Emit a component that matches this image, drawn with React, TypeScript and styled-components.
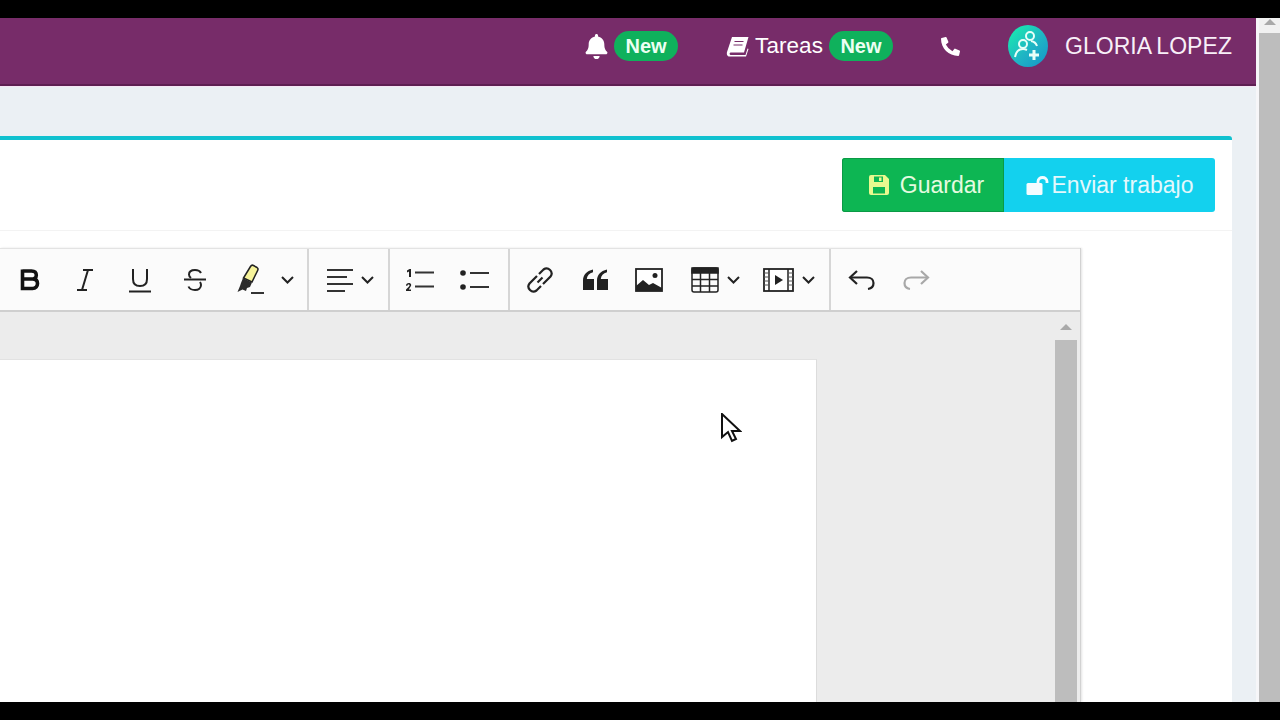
import React from 'react';
import styled, { createGlobalStyle } from 'styled-components';
import { FaBell, FaPhoneAlt } from 'react-icons/fa';

const GlobalStyle = createGlobalStyle`
   html, body {
      margin: 0;
      padding: 0;
      background: #000;
      overflow: hidden;
   }
   body {
      font-family: "Liberation Sans", Arial, sans-serif;
   }
`;

const Screen = styled.div`
   width: 1280px;
   height: 720px;
   padding: 18px 0;
   box-sizing: border-box;
   background: #000;
   display: flex;
`;

const Page = styled.div`
   width: 1256px;
   display: flex;
   flex-direction: column;
   background: #ebf0f4;
   overflow: hidden;
`;

const Gutter = styled.div`
   width: 3px;
   background: #f6f6f8;
`;

const Scrollbar = styled.div`
   display: flex;
   flex-direction: column;
   align-items: center;
   width: 21px;
   background: #f1f1f1;
`;

const ScrollArrow = styled.div<{ $height: number; $top: number }>`
   height: ${(p) => p.$height}px;
   box-sizing: border-box;
   padding-top: ${(p) => p.$top}px;
   width: 100%;
   display: flex;
   align-items: flex-start;
   justify-content: center;
   &::before {
      content: '';
      border-left: 6px solid transparent;
      border-right: 6px solid transparent;
      border-bottom: 6px solid #a9a9a9;
   }
`;

const ScrollThumb = styled.div`
   flex: 1;
   width: 100%;
   background: #bdbdbd;
`;

const Header = styled.header`
   height: 68px;
   box-sizing: border-box;
   flex-shrink: 0;
   background: #772c69;
   border-bottom: 2px solid #5e1f52;
   box-shadow: 0 1px 0 #f6e6f6;
   padding: 0 24px 10px 0;
   display: flex;
   align-items: center;
   justify-content: flex-end;
   gap: 48px;
   color: #fff;
`;

const NavItem = styled.div<{ $gap?: number }>`
   display: flex;
   align-items: center;
   font-size: 22.5px;
   letter-spacing: 0.05px;
   gap: ${(p) => p.$gap ?? 5}px;
   svg {
      flex-shrink: 0;
   }
`;

const Badge = styled.span`
   width: 64px;
   height: 30px;
   border-radius: 15px;
   background: #0fb15c;
   color: #ecfff2;
   font-size: 20px;
   font-weight: 700;
   letter-spacing: 0;
   display: flex;
   align-items: center;
   justify-content: center;
`;

const UserBox = styled.div`
   display: flex;
   align-items: center;
   gap: 17px;
`;

const Avatar = styled.div`
   width: 40px;
   height: 42px;
   border-radius: 50%;
   background: linear-gradient(135deg, #19e8b0 10%, #1fb5c4 55%, #1593c9 100%);
   display: flex;
   align-items: center;
   justify-content: center;
`;

const UserName = styled.span`
   font-size: 23px;
   letter-spacing: 0.05px;
   word-spacing: -1px;
   white-space: nowrap;
   color: #f8f0f8;
`;

const Card = styled.section`
   margin: 50px 24px 0 0;
   flex: 1;
   min-height: 0;
   background: #fff;
   border-top: 4px solid #0fc1cf;
   border-top-right-radius: 3px;
   display: flex;
   flex-direction: column;
`;

const ActionRow = styled.div`
   display: flex;
   justify-content: flex-end;
   padding: 18px 17px 18px 0;
   border-bottom: 1px solid #f3f3f3;
`;

const ActionButton = styled.button<{ $tone: 'green' | 'cyan'; $width: number; $gap: number }>`
   width: ${(p) => p.$width}px;
   height: 54px;
   padding: 0 0 0 ${(p) => (p.$tone === 'green' ? 6 : 0)}px;
   border: none;
   font: inherit;
   font-size: 23px;
   display: flex;
   align-items: center;
   justify-content: center;
   gap: ${(p) => p.$gap}px;
   background: ${(p) => (p.$tone === 'green' ? '#0db653' : '#13d1ee')};
   color: ${(p) => (p.$tone === 'green' ? '#e6fbe0' : '#e4f8fc')};
   border-radius: ${(p) => (p.$tone === 'green' ? '3px 0 0 3px' : '0 3px 3px 0')};
   box-shadow: ${(p) => (p.$tone === 'green' ? 'inset 0 0 0 1px #0a9a45' : 'none')};
`;

const Editor = styled.div`
   margin-top: 17px;
   width: 1081px;
   box-sizing: border-box;
   flex: 1;
   min-height: 0;
   display: flex;
   flex-direction: column;
   border-right: 1px solid #d2d2d2;
   box-shadow: 1px 0 2px #e4e4e4;
`;

const Toolbar = styled.div`
   height: 64px;
   box-sizing: border-box;
   flex-shrink: 0;
   display: flex;
   background: #fbfbfb;
   border-top: 1px solid #e3e3e3;
   border-bottom: 2px solid #cfcfcf;
`;

const ToolGroup = styled.div<{ $width: number; $inset: number }>`
   width: ${(p) => p.$width}px;
   box-sizing: border-box;
   padding-left: ${(p) => p.$inset}px;
   display: flex;
   align-items: center;
   border-right: 2px solid #d6d6d6;
   &:last-child {
      border-right: none;
   }
`;

const ToolButton = styled.div<{ $width?: number; $lead?: number }>`
   width: ${(p) => p.$width ?? 55}px;
   margin-left: ${(p) => p.$lead ?? 0}px;
   height: 100%;
   flex-shrink: 0;
   display: flex;
   align-items: center;
   justify-content: center;
`;

const Workspace = styled.div`
   flex: 1;
   min-height: 0;
   display: flex;
   background: #ececec;
`;

const SheetArea = styled.div`
   flex: 1;
   padding: 47px 0 0 0;
   position: relative;
`;

const Sheet = styled.div`
   width: 817px;
   height: 100%;
   background: #fff;
   border-right: 1px solid #dcdcdc;
   border-top: 1px solid #e2e2e2;
   box-sizing: border-box;
`;

const Pointer = styled.svg`
   position: absolute;
   left: 720px;
   top: 101px;
`;

const EditorScrollbar = styled.div`
   width: 22px;
   margin-right: 3px;
   display: flex;
   flex-direction: column;
`;

const Chevron = () => (
   <svg width="13" height="8" viewBox="0 0 13 8" fill="none" stroke="#222" strokeWidth="2">
      <path d="M1 1 6.500 6.500 12 1" />
   </svg>
);

const BookIcon = () => (
   <svg width="23" height="21" viewBox="0 0 23 21">
      <path
         d="M6 1h16.500L18 16.500H5c-1.800 0-1.800 2.500 0 2.500h14.500l2-6.500 1 .5-2.500 7.500H3.500C1 20.500.5 18 1 16z"
         fill="#fff"
      />
      <path d="M8.500 5.500h9M7.500 9h9" stroke="#772c69" strokeWidth="1.200" />
   </svg>
);

const PeopleIcon = () => (
   <svg width="28" height="32" viewBox="0 0 28 32" fill="none" stroke="#e8fff8" strokeWidth="2">
      <circle cx="16" cy="6" r="4" />
      <circle cx="9" cy="14" r="4" />
      <path d="M1 27c1-6 4-8 8-8 2 0 3 .5 4 1" />
      <path d="M17 11c3 .5 5 2 6 5" />
      <path d="M20 20v10M15 25h10" strokeWidth="3" />
   </svg>
);

const SaveIcon = () => (
   <svg width="22" height="22" viewBox="0 0 22 22">
      <path
         fillRule="evenodd"
         d="M3 1h14l4 4v14a2 2 0 0 1-2 2H3a2 2 0 0 1-2-2V3a2 2 0 0 1 2-2zM6 2.500V8h9V2.500zM5 13v6.500h12V13z"
         fill="#e9f98f"
      />
      <rect x="11" y="3.500" width="2.500" height="3.500" fill="#e9f98f" />
   </svg>
);

const OpenLockIcon = () => (
   <svg width="24" height="19" viewBox="0 0 24 19">
      <rect x="0.500" y="7" width="16" height="12" rx="1.500" fill="#f4fcff" />
      <path d="M12 8V5.500C12 3 14 1.500 16.500 1.500S21 3 21 5.500V7" fill="none" stroke="#f4fcff" strokeWidth="2.800" />
   </svg>
);

const BoldIcon = () => (
   <svg width="24" height="24" viewBox="0 0 24 24" fill="none" stroke="#111" strokeWidth="3.600">
      <path d="M4.500 3h9c3 0 4.800 1.600 4.800 4.200S16.500 11 13.500 11H4.500M4.500 11H14.500c3.200 0 5 1.800 5 4.600s-1.800 4.900-5 4.900h-10V1.500" />
   </svg>
);

const ItalicIcon = () => (
   <svg width="20" height="26" viewBox="0 0 20 26" fill="none" stroke="#222" strokeWidth="2">
      <path d="M8 3h10M2 23h10M13 3 7 23" />
   </svg>
);

const UnderlineIcon = () => (
   <svg width="24" height="26" viewBox="0 0 24 26" fill="none" stroke="#222" strokeWidth="2">
      <path d="M5 2v10c0 5 3 7 7 7s7-2 7-7V2" />
      <path d="M1 24.500h22" />
   </svg>
);

const StrikeIcon = () => (
   <svg width="24" height="26" viewBox="0 0 24 26" fill="none" stroke="#222" strokeWidth="2">
      <path d="M18 6c-1-2-3-3-6-3-4 0-6 2-6 4.500 0 1.500.7 2.500 2 3.500M17 15c.7 1 1 2 1 3 0 3-2.500 5-6 5-3 0-5.500-1-6.500-3.500" />
      <path d="M1 12.500h22" />
   </svg>
);

const HighlightIcon = () => (
   <svg width="30" height="32" viewBox="0 0 30 32">
      <path d="M8.500 14 15.500 2.500c.8-1.300 1.800-1.700 3-1l3.500 2c1 .7 1.300 1.700.7 2.800L17 18z" fill="#f6f39a" stroke="#222" strokeWidth="1.500" />
      <path d="M8 14 17 18.500l-2 4.500-3 1-1 3-3.500-1.500-5 2.500 2.500-6 1-3z" fill="#2b2b2b" />
      <path d="M16 29h13" stroke="#333" strokeWidth="2" />
   </svg>
);

const AlignIcon = () => (
   <svg width="28" height="26" viewBox="0 0 28 26" fill="none" stroke="#333" strokeWidth="2">
      <path d="M1 3h26M1 10h20M1 17h26M1 24h18" />
   </svg>
);

const OrderedListIcon = () => (
   <svg width="30" height="26" viewBox="0 0 30 26" fill="#222">
      <path d="M2 3.500 4.500 2H6v8H4V4.500L2 5.500z" />
      <path d="M1 24v-1.500l3-3c.8-.8.8-2-.3-2-.8 0-1.200.5-1.200 1.200H1c0-1.800 1.200-2.700 2.800-2.700 2 0 3.200 1.800 1.800 3.600L3.800 22.500H6V24z" />
      <path d="M10 5.500h19M10 19.500h19" stroke="#333" strokeWidth="2" />
   </svg>
);

const BulletListIcon = () => (
   <svg width="30" height="24" viewBox="0 0 30 24" fill="#222">
      <circle cx="3" cy="5" r="2.800" />
      <circle cx="3" cy="19" r="2.800" />
      <path d="M10 5h19M10 19h19" stroke="#333" strokeWidth="2" />
   </svg>
);

const LinkIcon = () => (
   <svg width="28" height="28" viewBox="0 0 28 28" fill="none" stroke="#222" strokeWidth="2.200">
      <path d="M13 8 17.500 3.500a5 5 0 0 1 7 7L17 18" />
      <path d="M15 20 10.500 24.500a5 5 0 0 1-7-7L11 10" />
      <path d="M11.500 16.500 16.500 11.500" />
   </svg>
);

const QuoteIcon = () => (
   <svg width="25" height="21" viewBox="0 0 25 21" fill="#222">
      <path d="M0 21V11.500C0 6 3.500 2 10 .5v2.700C6.200 4.500 4 6.500 3.800 10H11v11zM14 21V11.500C14 6 17.500 2 24 .5v2.700c-3.800 1.300-6 3.300-6.200 6.800H25v11z" />
   </svg>
);

const ImageIcon = () => (
   <svg width="28" height="24" viewBox="0 0 28 24">
      <rect x="1" y="1" width="26" height="22" fill="#fff" stroke="#222" strokeWidth="1.800" />
      <circle cx="20" cy="7.500" r="2.500" fill="#222" />
      <path d="M1 23v-5l7-6 6 5 4-2 9 5v3z" fill="#222" />
   </svg>
);

const TableIcon = () => (
   <svg width="28" height="26" viewBox="0 0 28 26" fill="none" stroke="#222" strokeWidth="1.500">
      <rect x="1" y="1" width="26" height="24" rx="2" />
      <rect x="1" y="1" width="26" height="5" fill="#222" />
      <path d="M9.500 1v24M18.500 1v24M1 12.500h26M1 19h26" />
   </svg>
);

const MediaIcon = () => (
   <svg width="31" height="24" viewBox="0 0 31 24">
      <rect x="1" y="1" width="29" height="22" fill="#fff" stroke="#222" strokeWidth="1.800" />
      <path d="M6 1v22M25 1v22" stroke="#222" strokeWidth="1.500" />
      <path d="M1 5h5M1 9h5M1 13h5M1 17h5M25 5h5M25 9h5M25 13h5M25 17h5" stroke="#555" strokeWidth="1" />
      <path d="M12 7v10l8-5z" fill="#222" />
   </svg>
);

const UndoIcon = ({ color }: { color: string }) => (
   <svg width="28" height="22" viewBox="0 0 28 22" fill="none" stroke={color} strokeWidth="2.200">
      <path d="M9 2 2 8.500 9 15" />
      <path d="M2 8.500h17c4 0 6.500 2.500 6.500 5.500s-2 5.500-5.500 6" />
   </svg>
);

const RedoIcon = ({ color }: { color: string }) => (
   <svg width="28" height="22" viewBox="0 0 28 22" fill="none" stroke={color} strokeWidth="2.200">
      <path d="M19 2 26 8.500 19 15" />
      <path d="M26 8.500H9C5 8.500 2.500 11 2.500 14s2 5.500 5.500 6" />
   </svg>
);

export default function App() {
   return (
      <Screen>
         <GlobalStyle />
         <Page>
            <Header>
               <NavItem>
                  <FaBell size={25} />
                  <Badge>New</Badge>
               </NavItem>
               <NavItem $gap={6}>
                  <BookIcon />
                  <span>Tareas</span>
                  <Badge>New</Badge>
               </NavItem>
               <NavItem>
                  <FaPhoneAlt size={19} />
               </NavItem>
               <UserBox>
                  <Avatar>
                     <PeopleIcon />
                  </Avatar>
                  <UserName>GLORIA LOPEZ</UserName>
               </UserBox>
            </Header>

            <Card>
               <ActionRow>
                  <ActionButton $tone="green" $width={162} $gap={10}>
                     <SaveIcon />
                     Guardar
                  </ActionButton>
                  <ActionButton $tone="cyan" $width={211} $gap={2}>
                     <OpenLockIcon />
                     Enviar trabajo
                  </ActionButton>
               </ActionRow>

               <Editor>
                  <Toolbar>
                     <ToolGroup $width={309} $inset={2}>
                        <ToolButton><BoldIcon /></ToolButton>
                        <ToolButton><ItalicIcon /></ToolButton>
                        <ToolButton><UnderlineIcon /></ToolButton>
                        <ToolButton><StrikeIcon /></ToolButton>
                        <ToolButton><HighlightIcon /></ToolButton>
                        <ToolButton $width={21}><Chevron /></ToolButton>
                     </ToolGroup>
                     <ToolGroup $width={81} $inset={17}>
                        <ToolButton $width={28}><AlignIcon /></ToolButton>
                        <ToolButton $width={28}><Chevron /></ToolButton>
                     </ToolGroup>
                     <ToolGroup $width={120} $inset={3}>
                        <ToolButton><OrderedListIcon /></ToolButton>
                        <ToolButton><BulletListIcon /></ToolButton>
                     </ToolGroup>
                     <ToolGroup $width={322} $inset={3}>
                        <ToolButton><LinkIcon /></ToolButton>
                        <ToolButton><QuoteIcon /></ToolButton>
                        <ToolButton $width={52}><ImageIcon /></ToolButton>
                        <ToolButton $lead={8} $width={44}><TableIcon /></ToolButton>
                        <ToolButton $width={14}><Chevron /></ToolButton>
                        <ToolButton $lead={22} $width={31}><MediaIcon /></ToolButton>
                        <ToolButton $lead={8} $width={14}><Chevron /></ToolButton>
                     </ToolGroup>
                     <ToolGroup $width={249} $inset={3}>
                        <ToolButton><UndoIcon color="#222" /></ToolButton>
                        <ToolButton $width={53}><RedoIcon color="#a8a8a8" /></ToolButton>
                     </ToolGroup>
                  </Toolbar>
                  <Workspace>
                     <SheetArea>
                        <Sheet />
                        <Pointer width="22" height="32" viewBox="0 0 22 32" fill="#fff" stroke="#111" strokeWidth="2">
                           <path d="M2 1v23l6-5 4 9 4-2-4-8h8z" />
                        </Pointer>
                     </SheetArea>
                     <EditorScrollbar>
                        <ScrollArrow $height={28} $top={12} />
                        <ScrollThumb />
                     </EditorScrollbar>
                  </Workspace>
               </Editor>
            </Card>
         </Page>
         <Gutter />
         <Scrollbar>
            <ScrollArrow $height={15} $top={1} />
            <ScrollThumb />
         </Scrollbar>
      </Screen>
   );
}
